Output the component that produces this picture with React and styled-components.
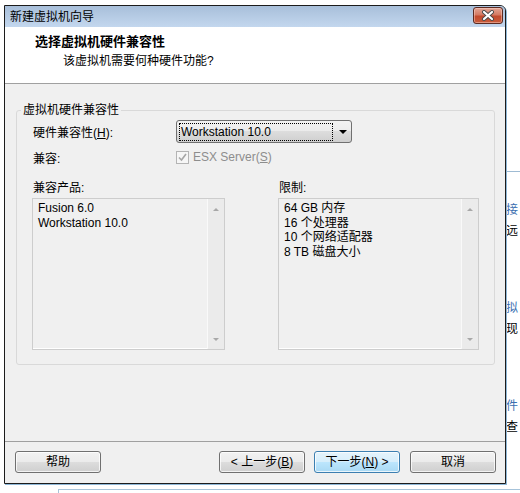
import React from 'react';
import styled, { createGlobalStyle } from 'styled-components';

const GlobalStyle = createGlobalStyle`
  html, body {
    margin: 0;
    padding: 0;
    background: #fff;
  }
  body {
    font-family: "Liberation Sans", "Noto Sans CJK SC", sans-serif;
    font-size: 12px;
    color: #000;
  }
  * {
    box-sizing: border-box;
  }
`;

const Desktop = styled.div`
  position: relative;
  width: 520px;
  height: 493px;
  overflow: hidden;
  background: #fff;
`;

/* page content that sits behind the dialog */
const Backdrop = styled.div`
  display: flex;
  flex-direction: column;
  padding-top: 171px;
`;

const Rule = styled.div`
  margin-left: 494px;
  height: 1px;
  background: #9fbbd3;
`;

const Article = styled.div`
  margin-left: 494px;
  margin-top: ${p => p.$first ? '28px' : '56px'};
  white-space: nowrap;
  line-height: 21px;
  font-size: 12px;
`;

const ArticleTitle = styled.div`
  color: #3b6fb0;
`;

const ArticleDesc = styled.div`
  color: #000;
`;

const BottomBox = styled.div`
  margin-left: 58px;
  margin-top: 51px;
  height: 20px;
  border-top: 1px solid #a6c3da;
  border-left: 1px solid #a6c3da;
`;

const Window = styled.div`
  position: absolute;
  left: 4px;
  top: 5px;
  width: 502px;
  height: 479px;
  border: 1px solid #1c1c1c;
  border-top-right-radius: 6px;
  box-shadow: 1px 1px 0 #8fb8d8;
  background: #f0f0f0;
  display: flex;
  flex-direction: column;
  overflow: hidden;
`;

const TitleBar = styled.div`
  height: 21px;
  flex: none;
  display: flex;
  align-items: flex-start;
  justify-content: space-between;
  padding: 1px 2px 0 5px;
  background: linear-gradient(#a8bfda, #c3d7ee);
`;

const TitleText = styled.div`
  line-height: 20px;
`;

const CloseButton = styled.div`
  width: 30px;
  height: 17px;
  border: 1px solid #5b2b22;
  border-radius: 3px;
  display: flex;
  align-items: center;
  justify-content: center;
  background: linear-gradient(#e2a595 0%, #d47a63 45%, #c24a2d 55%, #c85c3c 100%);
  box-shadow: inset 0 0 0 1px rgba(255, 220, 210, 0.45);
`;

const Header = styled.div`
  height: 57px;
  flex: none;
  background: #fff;
  border-bottom: 1px solid #a0a0a0;
  padding-top: 8px;
`;

const HeaderTitle = styled.div`
  padding-left: 30px;
  font-size: 13px;
  font-weight: bold;
  line-height: 14px;
`;

const HeaderSub = styled.div`
  margin-top: 5px;
  padding-left: 58px;
  line-height: 14px;
`;

const Body = styled.div`
  flex: 1;
  padding: 18px 10px 0 11px;
`;

const Group = styled.fieldset`
  margin: 0;
  padding: 0;
  border: 1px solid #d9d9d9;
  border-radius: 3px;
`;

const Legend = styled.legend`
  margin-left: 4px;
  padding: 0 2px;
  line-height: 16px;
`;

const GroupInner = styled.div`
  padding: 2px 15px 14px 15px;
`;

const FormRow = styled.div`
  display: grid;
  grid-template-columns: 144px auto;
  align-items: center;
  height: ${p => p.$h}px;
  margin-top: ${p => p.$mt || 0}px;
`;

const FieldLabel = styled.div`
  padding-left: 1px;
`;

const Select = styled.div`
  width: 176px;
  height: 23px;
  border: 1px solid #707070;
  border-radius: 3px;
  background: linear-gradient(#f2f2f2 0%, #ebebeb 50%, #dddddd 50%, #cfcfcf 100%);
  display: flex;
  align-items: center;
  padding: 0 2px 0 2px;
`;

const FocusRect = styled.div`
  width: 154px;
  height: 18px;
  border: 1px dotted #000;
  line-height: 16px;
  padding-left: 1px;
`;

const Arrow = styled.div`
  margin-left: 6px;
  width: 0;
  height: 0;
  border-left: 4px solid transparent;
  border-right: 4px solid transparent;
  border-top: 4px solid #000;
`;

const CheckWrap = styled.div`
  display: flex;
  align-items: center;
  gap: 4px;
  color: #8d8d8d;
`;

const CheckBox = styled.div`
  width: 13px;
  height: 13px;
  border: 1px solid #b4b4b4;
  background: #f6f6f6;
  display: flex;
  align-items: center;
  justify-content: center;
`;

const ListLabels = styled.div`
  display: flex;
  justify-content: space-between;
  margin-top: 13px;
  line-height: 16px;
`;

const ListLabel = styled.div`
  width: ${p => p.$w}px;
  padding-left: 1px;
`;

const Lists = styled.div`
  display: flex;
  justify-content: space-between;
  margin-top: 2px;
`;

const ListBox = styled.div`
  width: ${p => p.$w}px;
  height: 152px;
  border: 1px solid #cdcdcd;
  box-shadow: inset -1px -1px 0 #fff;
  display: flex;
`;

const ListItems = styled.div`
  flex: 1;
  padding: 2px 5px;
  line-height: 14.5px;
  white-space: nowrap;
`;

const ScrollTrack = styled.div`
  width: 17px;
  border-left: 1px solid #f9f9f9;
  background: #ebebeb;
  display: flex;
  flex-direction: column;
  justify-content: space-between;
  align-items: center;
  padding: 9px 0 8px;
`;

const ScrollArrow = styled.div`
  width: 0;
  height: 0;
  border-left: 3.5px solid transparent;
  border-right: 3.5px solid transparent;
  ${p => p.$down ? 'border-top: 3px solid #a8a8a8;' : 'border-bottom: 3px solid #a8a8a8;'}
`;

const Footer = styled.div`
  flex: none;
  display: flex;
  align-items: center;
  gap: 9px;
  border-top: 1px solid #a0a0a0;
  padding: 9px 9px 10px 10px;
`;

const Spacer = styled.div`
  flex: 1;
`;

const Button = styled.button`
  width: 86px;
  height: 22px;
  padding: 0;
  margin: 0;
  margin-left: ${p => p.$gap || 0}px;
  font: inherit;
  color: #000;
  border: 1px solid ${p => (p.$primary ? '#3c7fb1' : '#707070')};
  border-radius: 3px;
  background: ${p =>
    p.$primary
      ? 'linear-gradient(#e5f4fc 0%, #d7eefb 50%, #bde6fd 50%, #a9d9f4 100%)'
      : 'linear-gradient(#f2f2f2 0%, #ebebeb 50%, #dddddd 50%, #cfcfcf 100%)'};
  box-shadow: inset 0 0 0 1px rgba(255, 255, 255, 0.75);
  line-height: 20px;
`;

const compat = ['Fusion 6.0', 'Workstation 10.0'];
const limits = ['64 GB 内存', '16 个处理器', '10 个网络适配器', '8 TB 磁盘大小'];

const ScrollBar = () => (
  <ScrollTrack>
    <ScrollArrow />
    <ScrollArrow $down />
  </ScrollTrack>
);

const App = () => (
  <Desktop>
    <GlobalStyle />
    <Backdrop>
      <Rule />
      <Article $first>
        <ArticleTitle>连接</ArticleTitle>
        <ArticleDesc>在远</ArticleDesc>
      </Article>
      <Article>
        <ArticleTitle>模拟</ArticleTitle>
        <ArticleDesc>实现</ArticleDesc>
      </Article>
      <Article>
        <ArticleTitle>文件</ArticleTitle>
        <ArticleDesc>检查</ArticleDesc>
      </Article>
      <BottomBox />
    </Backdrop>

    <Window>
      <TitleBar>
        <TitleText>新建虚拟机向导</TitleText>
        <CloseButton>
          <svg width="14" height="11" viewBox="0 0 14 11">
            <path d="M3 2 L11 9 M11 2 L3 9" stroke="#4a4a4a" strokeWidth="4" strokeLinecap="round" />
            <path d="M3 2 L11 9 M11 2 L3 9" stroke="#fff" strokeWidth="2.2" strokeLinecap="round" />
          </svg>
        </CloseButton>
      </TitleBar>

      <Header>
        <HeaderTitle>选择虚拟机硬件兼容性</HeaderTitle>
        <HeaderSub>该虚拟机需要何种硬件功能?</HeaderSub>
      </Header>

      <Body>
        <Group>
          <Legend>虚拟机硬件兼容性</Legend>
          <GroupInner>
            <FormRow $h={23}>
              <FieldLabel>
                硬件兼容性(<u>H</u>):
              </FieldLabel>
              <Select>
                <FocusRect>Workstation 10.0</FocusRect>
                <Arrow />
              </Select>
            </FormRow>
            <FormRow $h={20} $mt={4}>
              <FieldLabel>兼容:</FieldLabel>
              <CheckWrap>
                <CheckBox>
                  <svg width="9" height="9" viewBox="0 0 9 9">
                    <path d="M1 4.5 L3.5 7 L8 1" fill="none" stroke="#a6a6a6" strokeWidth="1.6" />
                  </svg>
                </CheckBox>
                <span>
                  ESX Server(<u>S</u>)
                </span>
              </CheckWrap>
            </FormRow>

            <ListLabels>
              <ListLabel $w={193}>兼容产品:</ListLabel>
              <ListLabel $w={201}>限制:</ListLabel>
            </ListLabels>
            <Lists>
              <ListBox $w={193}>
                <ListItems>
                  {compat.map(t => (
                    <div key={t}>{t}</div>
                  ))}
                </ListItems>
                <ScrollBar />
              </ListBox>
              <ListBox $w={201}>
                <ListItems>
                  {limits.map(t => (
                    <div key={t}>{t}</div>
                  ))}
                </ListItems>
                <ScrollBar />
              </ListBox>
            </Lists>
          </GroupInner>
        </Group>
      </Body>

      <Footer>
        <Button>帮助</Button>
        <Spacer />
        <Button>
          &lt; 上一步(<u>B</u>)
        </Button>
        <Button $primary>
          下一步(<u>N</u>) &gt;
        </Button>
        <Button $gap={1}>取消</Button>
      </Footer>
    </Window>
  </Desktop>
);

export default App;
